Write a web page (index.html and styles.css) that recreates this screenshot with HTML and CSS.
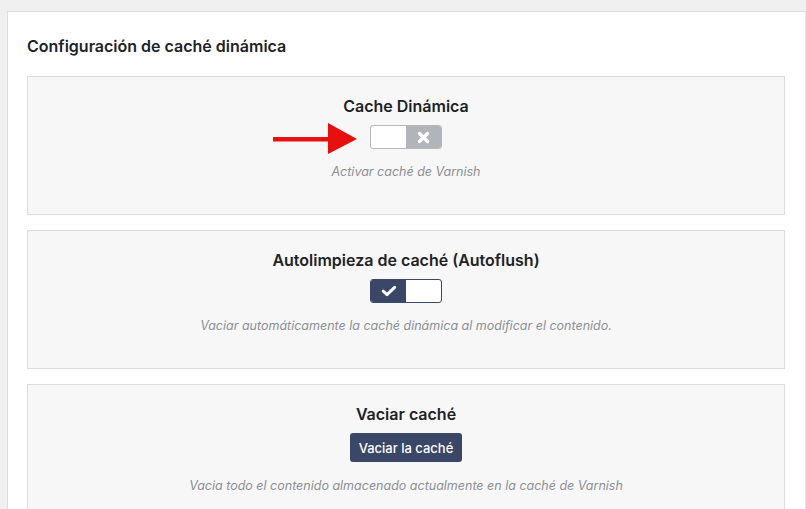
FILE: index.html
```html
<!DOCTYPE html>
<html lang="es">

<head>
  <meta charset="UTF-8">
  <meta name="viewport" content="width=device-width, initial-scale=1.0">
  <title>Configuración de caché dinámica</title>
  <link rel="stylesheet" href="styles.css">
</head>

<body>
  <div class="panel">
    <h2 class="panel-title">Configuración de caché dinámica</h2>

    <div class="cards">
      <!-- Cache dinámica -->
      <section class="card card-arrow">
        <h3>Cache Dinámica</h3>
        <span class="toggle toggle-off">
          <span class="toggle-side"></span>
          <span class="toggle-side toggle-icon">
            <svg width="13" height="13" viewBox="0 0 13 13">
              <path d="M2.5 2.5 L10.5 10.5 M10.5 2.5 L2.5 10.5" stroke="#fff" stroke-width="3.4" stroke-linecap="round" />
            </svg>
          </span>
        </span>
        <p class="hint">Activar caché de Varnish</p>
        <svg class="arrow" width="84" height="32" viewBox="0 0 84 32">
          <rect x="0" y="14" width="58" height="4.5" fill="#e8100e" />
          <polygon points="55,0 84,16 55,31" fill="#e8100e" />
        </svg>
      </section>

      <!-- Autoflush -->
      <section class="card">
        <h3>Autolimpieza de caché (Autoflush)</h3>
        <span class="toggle toggle-on">
          <span class="toggle-side toggle-icon">
            <svg width="16" height="12" viewBox="0 0 16 12">
              <path d="M2.2 6.2 L6 9.6 L13.6 2.4" stroke="#fff" stroke-width="3" fill="none" stroke-linecap="round" stroke-linejoin="round" />
            </svg>
          </span>
          <span class="toggle-side"></span>
        </span>
        <p class="hint">Vaciar automáticamente la caché dinámica al modificar el contenido.</p>
      </section>

      <!-- Vaciar caché -->
      <section class="card">
        <h3>Vaciar caché</h3>
        <button class="btn" type="button">Vaciar la caché</button>
        <p class="hint">Vacia todo el contenido almacenado actualmente en la caché de Varnish</p>
      </section>
    </div>
  </div>
</body>

</html>
```

FILE: styles.css
```css
* {
  margin: 0;
  padding: 0;
}

*,
*::before,
*::after {
  box-sizing: border-box;
}

body {
  background: #f0f0f1;
  font-family: Inter, "Noto Sans", sans-serif;
  color: #1d2327;
  overflow: hidden;
  height: 509px;
}

/* Panel blanco */
.panel {
  margin: 11px 0 0 7px;
  background: #fff;
  border: 1px solid #dcdcde;
  border-right-color: #e2e2e4;
  padding: 23px 20px 40px 19px;
}

.panel-title {
  font-size: 16px;
  font-weight: 600;
  line-height: 22px;
  margin-bottom: 19px;
}

.cards {
  display: flex;
  flex-direction: column;
  gap: 15px;
}

/* Tarjetas */
.card {
  background: #f7f7f7;
  border: 1px solid #dcdcde;
  padding: 18px 20px 33px;
  display: flex;
  flex-direction: column;
  align-items: center;
  text-align: center;
}

.card h3 {
  font-size: 16px;
  font-weight: 600;
  line-height: 22px;
}

.card-arrow {
  position: relative;
}

.arrow {
  position: absolute;
  left: 245px;
  top: 46px;
}

.hint {
  margin-top: 14px;
  font-size: 12.5px;
  line-height: 18px;
  font-style: italic;
  color: #8c8f94;
}

/* Interruptores */
.toggle {
  margin-top: 8px;
  display: flex;
  width: 72px;
  height: 24px;
  border-radius: 3px;
  overflow: hidden;
  border: 1px solid;
  background: #fff;
}

.toggle-side {
  flex: 1;
  display: flex;
  align-items: center;
  justify-content: center;
}

.toggle-off {
  border-color: #b4b6ba;
}

.toggle-off .toggle-icon {
  background: #b1b4b9;
}

.toggle-on {
  border-color: #3a4766;
}

.toggle-on .toggle-icon {
  background: #3a4766;
}

/* Botón */
.btn {
  margin-top: 8px;
  height: 29px;
  width: 112px;
  border: none;
  border-radius: 3px;
  background: #3a4766;
  color: #fff;
  font: 500 13px Inter, "Noto Sans", sans-serif;
  cursor: pointer;
}

.btn + .hint {
  margin-top: 15px;
}
```
